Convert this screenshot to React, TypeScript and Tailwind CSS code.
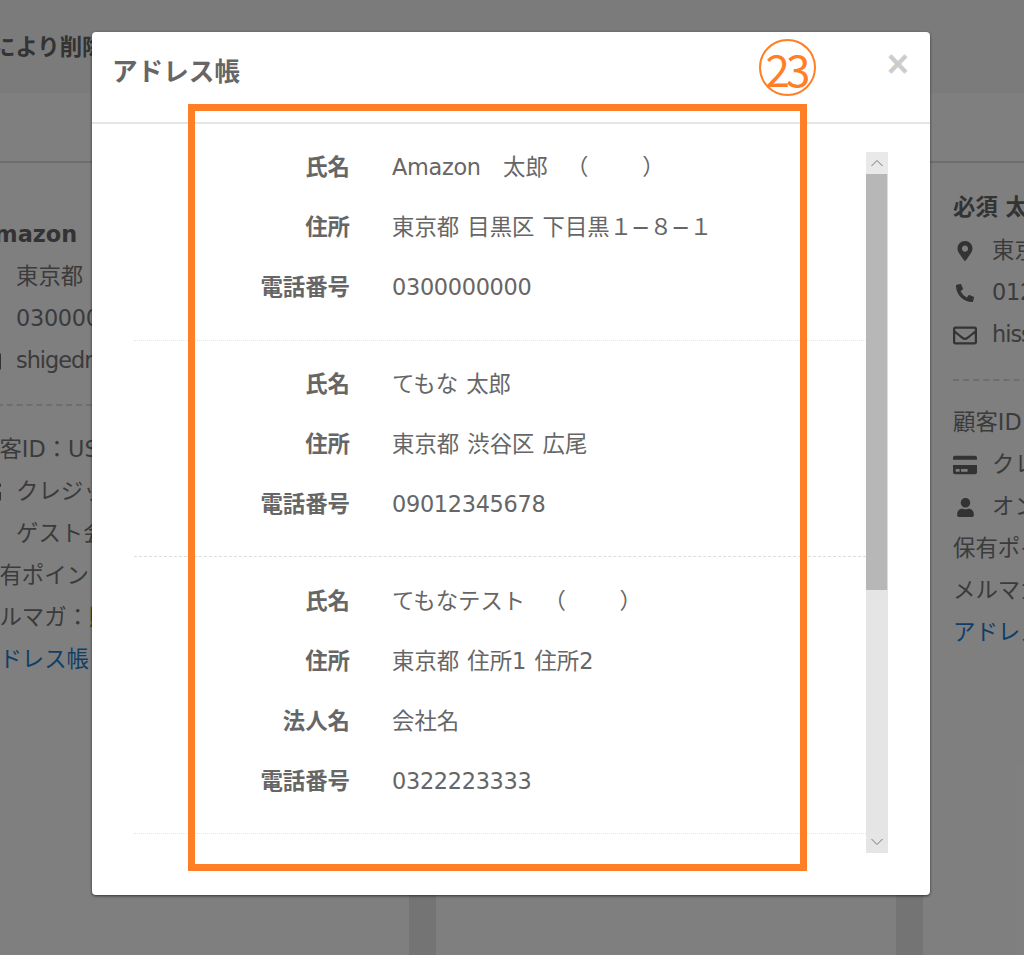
import { FaMapMarkerAlt, FaPhoneAlt, FaRegEnvelope, FaCreditCard, FaUser } from "react-icons/fa";

const font = { fontFamily: '"DejaVu Sans", "Noto Sans CJK JP", sans-serif' };

const Lat = ({ children }: { children: React.ReactNode }) => <span className="tracking-[-0.3px]">{children}</span>;
const Parens = () => (
  <span className="ml-[7px]">
    <span className="tracking-[3px]">（　　</span>）
  </span>
);

type Row = [string, React.ReactNode];
const blocks: { rows: Row[]; cls: string; wrap: string }[] = [
  {
    rows: [["氏名", <><Lat>Amazon</Lat>　太郎　<Parens /></>], ["住所", <>東京都 目黒区 下目黒<span className="tracking-[-0.6px]">１−８−１</span></>], ["電話番号", <Lat>0300000000</Lat>]],
    cls: "pb-[8px] border-b border-dotted border-[#e6e6e6]",
    wrap: "pt-[2px]",
  },
  {
    rows: [["氏名", "てもな 太郎"], ["住所", "東京都 渋谷区 広尾"], ["電話番号", <Lat>09012345678</Lat>]],
    cls: "mt-[28px] pb-[7px] border-b border-dashed border-[#dddddd]",
    wrap: "pt-[2px]",
  },
  {
    rows: [["氏名", <>てもなテスト　<Parens /></>], ["住所", "東京都 住所1 住所2"], ["法人名", "会社名"], ["電話番号", <Lat>0322223333</Lat>]],
    cls: "mt-[29px] pb-[7px] border-b border-dotted border-[#e6e6e6]",
    wrap: "pt-[2px]",
  },
];

function Line({ icon, children, cls = "text-[#777777]" }: { icon?: React.ReactNode; children: React.ReactNode; cls?: string }) {
  return (
    <div className={`h-[42px] flex items-center whitespace-nowrap text-[22.4px] ${cls}`}>
      {icon !== undefined && <span className="w-[39px] shrink-0 flex justify-center pr-[15px] text-[#666666]">{icon}</span>}
      {children}
    </div>
  );
}

function Card({ name, cls, mail, tel, kind, id, divider, nameCls }: { name: string; cls: string; mail: string; tel: string; kind: string; id: string; divider: string; nameCls: string }) {
  return (
    <div className={`w-[460px] shrink-0 h-[800px] bg-white overflow-hidden ${cls}`}>
      <div className={`h-[32px] flex items-center text-[22.4px] font-bold text-[#666666] whitespace-nowrap ${nameCls}`}>{name}</div>
      <Line icon={<FaMapMarkerAlt size={20} />}>東京都</Line>
      <Line icon={<FaPhoneAlt size={18} />}><Lat>{tel}</Lat></Line>
      <Line icon={<FaRegEnvelope size={25} />}><span className="tracking-[-1px]">{mail}</span></Line>
      <div className={`border-t-2 border-dashed border-[#dddddd] mr-[30px] ${divider}`} />
      <Line>顧客ID：{id}</Line>
      <Line icon={<FaCreditCard size={28} />}>クレジット</Line>
      <Line icon={<FaUser size={19} />}>{kind}</Line>
      <Line>保有ポイント：0</Line>
      <Line>メルマガ：<span className="text-[#7a9a20]">購読</span></Line>
      <Line cls="text-[#1f7fcc]">アドレス帳</Line>
    </div>
  );
}

export default function App() {
  return (
    <div style={font} className="relative w-[1024px] h-[955px] overflow-hidden bg-[#e8e8e8]">
      <div className="h-[93px] bg-[#f7f7f7] flex items-center">
        <span className="ml-[-7px] mb-[-3px] text-[22.4px] font-bold text-[#666666] whitespace-nowrap">により削除</span>
      </div>
      <div className="h-[70px] bg-white border-b-2 border-[#dddddd]" />
      <div className="flex gap-[27px] ml-[-51px]">
        <Card name="Amazon" cls="pl-[28px] pt-[56px]" nameCls="mb-[5px]" mail="shigedra@example.jp" tel="0300000000" kind="ゲスト会員" id="US0000" divider="mt-[22px] mb-[23px]" />
        <div className="w-[460px] shrink-0 h-[800px] bg-white" />
        <Card name="必須 太郎" cls="pl-[30px] pt-[29px]" nameCls="mb-[6px]" mail="hissu@example.jp" tel="0120000000" kind="オンライン" id="US0001" divider="mt-[23px] mb-[21px]" />
      </div>

      <div className="absolute inset-0 bg-black/50" />

      <div className="absolute left-[92px] top-[32px] w-[838px] h-[863px] bg-white rounded-[4px] shadow-[0_1px_3px_rgba(0,0,0,0.6)] flex flex-col">
        <div className="h-[92px] shrink-0 border-b-2 border-[#e5e5e5] pl-[20px] pt-[22px] pr-[21px] flex justify-between">
          <h2 className="text-[25.6px] leading-[36px] font-bold text-[#666666]">アドレス帳</h2>
          <span className="text-[38px] leading-[24px] font-bold text-[#cccccc] mt-[-2px] h-[24px]" style={{ fontFamily: '"Liberation Sans", sans-serif' }}>×</span>
        </div>
        <div className="flex-1 min-h-0 flex pt-[28px] pb-[42px] pl-[42px] pr-[42px]">
          <div className="flex-1 min-w-0 overflow-hidden">
            {blocks.map((b, i) => (
              <div key={i} className={b.cls}>
                {b.rows.map(([k, v]) => (
                  <div key={k} className={`h-[30px] mb-[30px] flex items-center text-[22.4px] whitespace-nowrap ${b.wrap}`}>
                    <div className="w-[216px] text-right font-bold text-[#666666]">{k}</div>
                    <div className="ml-[42px] text-[#666666] [word-spacing:1px]">{v}</div>
                  </div>
                ))}
              </div>
            ))}
          </div>
          <div className="w-[22px] shrink-0 flex flex-col bg-[#e5e5e5]">
            <div className="h-[22px] flex items-center justify-center bg-[#e9e9e9]">
              <svg width="14" height="8" viewBox="0 0 14 8" fill="none" stroke="#777777" strokeWidth="1"><path d="M1.5 7 L7 1.5 L12.5 7" /></svg>
            </div>
            <div className="h-[416px] bg-[#b7b7b7] border-r border-[#dcdcdc]" />
            <div className="flex-1" />
            <div className="h-[22px] flex items-center justify-center">
              <svg width="14" height="8" viewBox="0 0 14 8" fill="none" stroke="#777777" strokeWidth="1"><path d="M1.5 1 L7 6.5 L12.5 1" /></svg>
            </div>
          </div>
        </div>
      </div>

      <div className="absolute left-[188px] top-[104px] w-[619px] h-[767px] border-[7px] border-[#ff7f27]" />
      <div className="absolute left-[759px] top-[39px] w-[57px] h-[57px] rounded-full border-2 border-[#ff7f27] flex items-center justify-center text-[#ff7f27] text-[44px] tracking-[-4px] pr-[3px]" style={{ fontFamily: '"Noto Sans CJK JP", sans-serif', fontWeight: 400 }}>
        23
      </div>
    </div>
  );
}
